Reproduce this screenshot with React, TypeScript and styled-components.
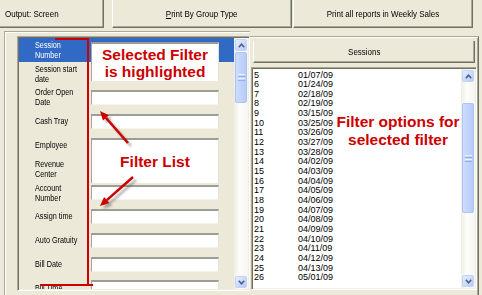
import React from "react";
import styled, { createGlobalStyle } from "styled-components";

const UI_FONT = `"Liberation Sans", Arial, sans-serif`;
const RED = "#CC0000";

const GlobalStyle = createGlobalStyle`
  html, body { margin: 0; padding: 0; background: #ECE9D8; }
  body { font-family: ${UI_FONT}; width: 482px; height: 295px; overflow: hidden; }
  * { box-sizing: border-box; }
`;

const Page = styled.div`
  position: relative;
  width: 482px;
  height: 295px;
  overflow: hidden;
  background: #ECE9D8;
  display: flex;
  flex-direction: column;
`;

/* condensed text: the reference's UI font is narrower than Arial */
const Narrow = styled.span<{ $origin?: string; $scale?: number }>`
  display: inline-block;
  white-space: nowrap;
  transform: scaleX(${(p) => p.$scale ?? 0.84});
  transform-origin: ${(p) => p.$origin ?? "center"} center;
`;

const Toolbar = styled.div`
  display: flex;
  height: 30px;
  flex: none;
  align-items: flex-start;
`;

const ToolButton = styled.div<{ $w: number; $ml: number; $left?: boolean; $h?: number }>`
  width: ${(p) => p.$w}px;
  height: ${(p) => p.$h ?? 28}px;
  margin-left: ${(p) => p.$ml}px;
  flex: none;
  display: flex;
  align-items: center;
  justify-content: ${(p) => (p.$left ? "flex-start" : "center")};
  padding-left: ${(p) => (p.$left ? 5 : 0)}px;
  background: #ECE9D8;
  border-right: 1px solid #716F64;
  border-bottom: 1px solid #716F64;
  border-left: ${(p) => (p.$left ? "none" : "1px solid #FFFFFF")};
  box-shadow: inset -1px -1px 0 #ACA899;
  font-size: 9.5px;
  color: #000;
  white-space: nowrap;
`;

const Main = styled.div`
  flex: 1;
  display: flex;
  align-items: flex-start;
`;

const LeftFrame = styled.div`
  margin-left: 4px;
  margin-top: 1px;
  width: 246px;
  height: 264px;
  border-left: 1px solid #ACA899;
  border-top: 1px solid #ACA899;
  box-shadow: inset 1px 1px 0 #FFFFFF;
  padding: 4px 0 0 12px;
`;

const ListBox = styled.div<{ $w: number; $h: number; $white?: boolean }>`
  width: ${(p) => p.$w}px;
  height: ${(p) => p.$h}px;
  border-top: 1px solid #ACA899;
  border-left: 1px solid #ACA899;
  border-right: 1px solid #FFFFFF;
  border-bottom: 1px solid #FFFFFF;
  box-shadow: inset 1px 1px 0 #716F64, inset -1px -1px 0 #F1EFE2;
  padding: 1px;
  display: flex;
  background: ${(p) => (p.$white ? "#FFFFFF" : "#ECE9D8")};
  overflow: hidden;
`;

const Rows = styled.div`
  width: 217px;
  display: flex;
  flex-direction: column;
  overflow: hidden;
`;

const FilterRow = styled.div<{ $selected?: boolean }>`
  flex: none;
  height: 23.8px;
  display: flex;
  align-items: flex-start;
  background: ${(p) => (p.$selected ? "#316AC5" : "#ECE9D8")};
`;

const FilterLabel = styled.div<{ $selected?: boolean }>`
  width: 72px;
  height: 100%;
  flex: none;
  padding-left: 16px;
  display: flex;
  flex-direction: column;
  justify-content: center;
  align-items: flex-start;
  font-size: 9.2px;
  line-height: 10px;
  color: ${(p) => (p.$selected ? "#FFFFFF" : "#000000")};
`;

const FilterInput = styled.div`
  width: 128px;
  height: 15px;
  margin-top: 4.5px;
  flex: none;
  background: #FFFFFF;
  border-top: 2px solid #9D9C95;
  border-left: 1px solid #A7A6A0;
  border-right: 1px solid #E4E2D6;
  border-bottom: 1px solid #F4F3EE;
`;

const RightFrame = styled.div`
  width: 229px;
  height: 260px;
  margin-top: 6px;
  border-top: 1px solid #ACA899;
  border-right: 1px solid #716F64;
  box-shadow: inset 0 1px 0 #FFFFFF, inset -1px 0 0 #ACA899;
  padding: 4px 0 0 1px;
  display: flex;
  flex-direction: column;
  gap: 4px;
`;

const SessionsButton = styled(ToolButton)`
  margin-left: 2px;
`;

const DateRows = styled.div`
  flex: 1;
  padding: 1.5px 0 0 1px;
  display: flex;
  flex-direction: column;
  font-size: 9px;
  line-height: 9.67px;
  color: #000;
`;

const DateRow = styled.div`
  display: flex;
  height: 9.67px;
`;

const DateNum = styled.span`
  width: 44px;
  flex: none;
`;

/* ---------- XP style scrollbar ---------- */
const Scroll = styled.div`
  width: 14px;
  height: 100%;
  flex: none;
  display: flex;
  flex-direction: column;
  background: linear-gradient(to right, #EEEDE5, #FDFDFA 40%, #F6F5EF);
`;

const ScrollBtn = styled.div`
  width: 14px;
  height: 14px;
  flex: none;
  padding: 1px;
  display: flex;
`;

const ScrollBtnFace = styled.div`
  flex: 1;
  border-radius: 2px;
  border: 1px solid #C3D3F8;
  background: linear-gradient(135deg, #E6EFFE 0%, #C7D8FD 60%, #B5CBF9 100%);
  display: flex;
  align-items: center;
  justify-content: center;
`;

const Track = styled.div<{ $h?: number }>`
  flex: ${(p) => (p.$h === undefined ? "1" : "none")};
  height: ${(p) => (p.$h === undefined ? "auto" : `${p.$h}px`)};
`;

const Thumb = styled.div<{ $h: number }>`
  height: ${(p) => p.$h}px;
  flex: none;
  margin: 0 1px;
  border-radius: 2px;
  border: 1px solid #AFC4F4;
  background: linear-gradient(to right, #CFDDFD 0%, #C2D4FC 50%, #B6CBF9 100%);
  display: flex;
  align-items: center;
  justify-content: center;
`;

const Chevron = ({ up }: { up?: boolean }) => (
  <svg width="7" height="5" viewBox="0 0 7 5">
    <polyline
      points={up ? "0.8,4.2 3.5,1.2 6.2,4.2" : "0.8,0.8 3.5,3.8 6.2,0.8"}
      fill="none"
      stroke="#4D6185"
      strokeWidth="1.6"
    />
  </svg>
);

const Grip = () => (
  <svg width="7" height="7" viewBox="0 0 7 7">
    {[0, 2, 4, 6].map((y) => (
      <rect key={y} x="0" y={y} width="7" height="1" fill={y % 4 === 0 ? "#EEF4FE" : "#8CB0F8"} />
    ))}
  </svg>
);

const ScrollBar = ({ before, thumb }: { before: number; thumb: number }) => (
  <Scroll>
    <ScrollBtn>
      <ScrollBtnFace>
        <Chevron up />
      </ScrollBtnFace>
    </ScrollBtn>
    <Track $h={before} />
    <Thumb $h={thumb}>
      <Grip />
    </Thumb>
    <Track />
    <ScrollBtn>
      <ScrollBtnFace>
        <Chevron />
      </ScrollBtnFace>
    </ScrollBtn>
  </Scroll>
);

/* ---------- annotations ---------- */
const Note = styled.div<{ $top: number; $h: number }>`
  position: absolute;
  left: 91px;
  top: ${(p) => p.$top}px;
  width: 128px;
  height: ${(p) => p.$h}px;
  background: #FFFFFF;
  border-top: 2px solid #9D9C95;
  border-left: 1px solid #A7A6A0;
  border-right: 1px solid #E4E2D6;
  display: flex;
  flex-direction: column;
  align-items: center;
  justify-content: center;
  font-family: "Liberation Sans", Arial, sans-serif;
  font-weight: bold;
  font-size: 15.5px;
  line-height: 17px;
  color: ${RED};
  text-align: center;
  z-index: 3;
`;

const FloatingNote = styled.div`
  position: absolute;
  left: 328px;
  top: 113px;
  width: 140px;
  font-family: "Liberation Sans", Arial, sans-serif;
  font-weight: bold;
  font-size: 15.5px;
  line-height: 17.5px;
  color: ${RED};
  text-align: center;
  z-index: 3;
`;

const Overlay = styled.svg`
  position: absolute;
  left: 0;
  top: 0;
  z-index: 5;
  pointer-events: none;
`;

const filters: { lines: string[]; selected?: boolean }[] = [
  { lines: ["Session", "Number"], selected: true },
  { lines: ["Session start", "date"] },
  { lines: ["Order Open", "Date"] },
  { lines: ["Cash Tray"] },
  { lines: ["Employee"] },
  { lines: ["Revenue", "Center"] },
  { lines: ["Account", "Number"] },
  { lines: ["Assign time"] },
  { lines: ["Auto Gratuity"] },
  { lines: ["Bill Date"] },
  { lines: ["Bill Time"] },
];

const sessions: [string, string][] = [
  ["5", "01/07/09"],
  ["6", "01/24/09"],
  ["7", "02/18/09"],
  ["8", "02/19/09"],
  ["9", "03/15/09"],
  ["10", "03/25/09"],
  ["11", "03/26/09"],
  ["12", "03/27/09"],
  ["13", "03/28/09"],
  ["14", "04/02/09"],
  ["15", "04/03/09"],
  ["16", "04/04/09"],
  ["17", "04/05/09"],
  ["18", "04/06/09"],
  ["19", "04/07/09"],
  ["20", "04/08/09"],
  ["21", "04/09/09"],
  ["22", "04/10/09"],
  ["23", "04/11/09"],
  ["24", "04/12/09"],
  ["25", "04/13/09"],
  ["26", "05/01/09"],
];

const Arrow = ({ line, head }: { line: [number, number, number, number]; head: string }) => (
  <g>
    <g transform="translate(3,3)" opacity="0.45" filter="url(#blur)">
      <line x1={line[0]} y1={line[1]} x2={line[2]} y2={line[3]} stroke="#555" strokeWidth="2.5" />
      <polygon points={head} fill="#555" />
    </g>
    <line x1={line[0]} y1={line[1]} x2={line[2]} y2={line[3]} stroke={RED} strokeWidth="2.5" />
    <polygon points={head} fill={RED} />
  </g>
);

export default function App() {
  return (
    <>
      <GlobalStyle />
      <Page>
        <Toolbar>
          <ToolButton $w={104} $ml={0} $left>
            <Narrow $origin="left">Output: Screen</Narrow>
          </ToolButton>
          <ToolButton $w={180} $ml={8}>
            <Narrow>
              <u>P</u>rint By Group Type
            </Narrow>
          </ToolButton>
          <ToolButton $w={180} $ml={1}>
            <Narrow>Print all reports in Weekly Sales</Narrow>
          </ToolButton>
        </Toolbar>
        <Main>
          <LeftFrame>
            <ListBox $w={233} $h={255}>
              <Rows>
                {filters.map((f, i) => (
                  <FilterRow key={i} $selected={f.selected}>
                    <FilterLabel $selected={f.selected}>
                      {f.lines.map((l) => (
                        <Narrow key={l} $origin="left" $scale={0.79}>
                          {l}
                        </Narrow>
                      ))}
                    </FilterLabel>
                    <FilterInput />
                  </FilterRow>
                ))}
              </Rows>
              <ScrollBar before={0} thumb={51} />
            </ListBox>
          </LeftFrame>
          <RightFrame>
            <SessionsButton $w={222} $ml={2} $h={22}>
              <Narrow>Sessions</Narrow>
            </SessionsButton>
            <ListBox $w={226} $h={223} $white>
              <DateRows>
                {sessions.map(([n, d]) => (
                  <DateRow key={n}>
                    <DateNum>{n}</DateNum>
                    <span>{d}</span>
                  </DateRow>
                ))}
              </DateRows>
              <ScrollBar before={20} thumb={110} />
            </ListBox>
          </RightFrame>
        </Main>

        <Note $top={42} $h={39}>
          <span>Selected Filter</span>
          <span>is highlighted</span>
        </Note>
        <Note $top={138} $h={45}>
          <span>Filter List</span>
        </Note>
        <FloatingNote>
          Filter options for
          <br />
          selected filter
        </FloatingNote>

        <Overlay width="482" height="295" viewBox="0 0 482 295">
          <defs>
            <filter id="blur" x="-20%" y="-20%" width="140%" height="140%">
              <feGaussianBlur stdDeviation="1.2" />
            </filter>
          </defs>
          <line x1="55" y1="39" x2="89" y2="39" stroke={RED} strokeWidth="2" />
          <line x1="88" y1="38" x2="88" y2="286" stroke={RED} strokeWidth="2" />
          <line x1="40" y1="285" x2="93" y2="285" stroke={RED} strokeWidth="2" />
          <Arrow line={[128, 143, 105.9, 117.8]} head="100,111 108.9,115.2 102.9,120.4" />
          <Arrow line={[133, 177, 106.8, 200.1]} head="100,206 109.4,203.1 104.1,197.1" />
        </Overlay>
      </Page>
    </>
  );
}
